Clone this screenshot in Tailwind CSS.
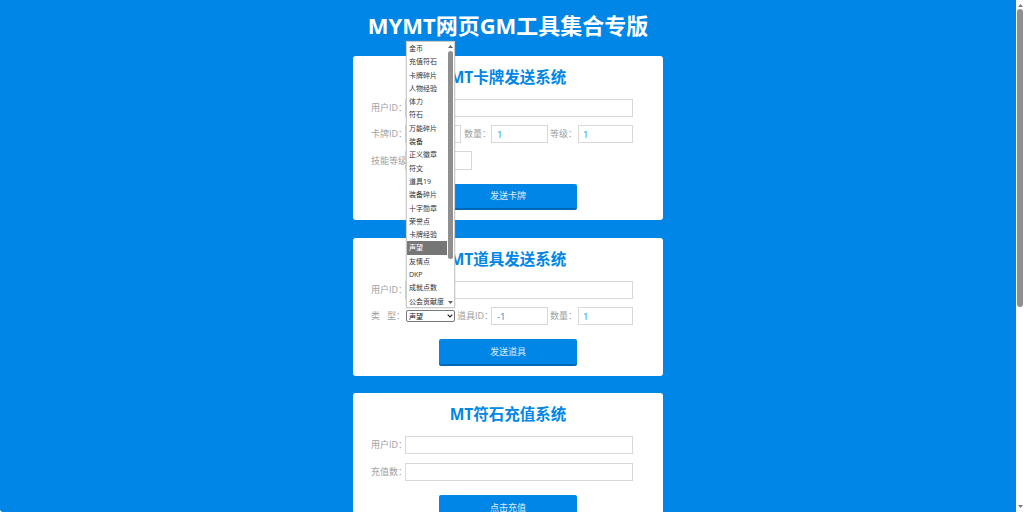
<!DOCTYPE html>
<html lang="en">
<head>
    <meta charset="UTF-8">
    <title>MYMT网页GM工具集合专版</title>
    <script src="https://cdn.jsdelivr.net/npm/@tailwindcss/browser@4"></script>
</head>
<body class="h-[512px] overflow-hidden flex bg-white font-['Open_Sans','Noto_Sans_CJK_SC',sans-serif]">
    <!-- page -->
    <div class="w-[1016px] h-[512px] overflow-hidden bg-[#0086e6] rounded-bl-[3px] flex flex-col items-center">
        <h1 class="h-14 shrink-0 pt-[7px] text-[22px] leading-[36px] font-bold text-white">MYMT网页GM工具集合专版</h1>

        <!-- card send -->
        <div class="w-[310px] h-[164px] shrink-0 bg-white rounded-[3px] pl-[18px] mb-[18px]">
            <h2 class="h-[43px] pt-[10px] pr-[18px] text-center text-[15.5px] leading-[22px] font-bold text-[#0086e6]">MT卡牌发送系统</h2>
            <div class="flex items-center h-[18px] mb-[8px]">
                <span class="w-[34px] text-[9px] text-[#a0a0a0] whitespace-nowrap">用户ID：</span>
                <input class="w-[228px] h-[18px] border border-[#d8d8d8] bg-white px-1 text-[9.500px]">
            </div>
            <div class="flex items-center h-[18px] mb-[8px]">
                <span class="w-[34px] text-[9px] text-[#a0a0a0] whitespace-nowrap">卡牌ID：</span>
                <input class="w-[56px] h-[18px] border border-[#d8d8d8] px-1 text-[9.500px]">
                <span class="w-[30px] pl-[3px] text-[9px] text-[#a0a0a0] whitespace-nowrap">数量：</span>
                <input value="1" class="w-[57px] h-[18px] border border-[#d8d8d8] px-[5px] text-[9.500px] text-[#2a8fdc]">
                <span class="w-[30px] pl-[2px] text-[9px] text-[#a0a0a0] whitespace-nowrap">等级：</span>
                <input value="1" class="w-[55px] h-[18px] border border-[#d8d8d8] px-[4px] text-[9.500px] text-[#2a8fdc]">
            </div>
            <div class="flex items-center h-[19px] mb-[14px]">
                <span class="w-[34px] text-[9px] text-[#a0a0a0] whitespace-nowrap">技能等级</span>
                <input class="w-[67px] h-[19px] border border-[#d8d8d8] px-1 text-[9.500px]">
            </div>
            <button class="block ml-[68px] w-[138px] h-[26px] rounded-[2px] bg-[#0086e6] border-b-2 border-[#0068b4] text-[9px] text-white/85">发送卡牌</button>
        </div>

        <!-- card items -->
        <div class="w-[310px] h-[138px] shrink-0 bg-white rounded-[3px] pl-[18px] mb-[17px]">
            <h2 class="h-[43px] pt-[10px] pr-[18px] text-center text-[15.5px] leading-[22px] font-bold text-[#0086e6]">MT道具发送系统</h2>
            <div class="flex items-center h-[18px] mb-[8px]">
                <span class="w-[34px] text-[9px] text-[#a0a0a0] whitespace-nowrap">用户ID：</span>
                <input class="w-[228px] h-[18px] border border-[#d8d8d8] px-1 text-[9.500px]">
            </div>
            <div class="flex items-center h-[18px] mb-[14px]">
                <span class="w-[35px] text-[9px] text-[#a0a0a0] whitespace-pre">类   型：</span>
                <div class="relative w-[49px] h-[12px]">
                    <div class="w-full h-full border border-[#777] rounded-[2px] flex items-center pl-[2px] text-[7px] leading-none text-[#222]">
                        <span class="flex-1">声望</span>
                        <svg class="w-[6px] h-[4px] mr-[1px]" viewBox="0 0 6 4"><path d="M.7.7 3 3l2.3-2.3" fill="none" stroke="#222" stroke-width="1.2"/></svg>
                    </div>
                    <!-- open select list -->
                    <div class="absolute left-0 bottom-[14px] w-[49px] h-[267px] bg-white border border-[#ccc] flex shadow-[0_0_1px_#999]">
                        <ul class="w-[40px] text-[7px] leading-[13.300px] text-[#333] whitespace-nowrap">
                            <li class="pl-[2px]">金币</li>
                            <li class="pl-[2px]">充值符石</li>
                            <li class="pl-[2px]">卡牌碎片</li>
                            <li class="pl-[2px]">人物经验</li>
                            <li class="pl-[2px]">体力</li>
                            <li class="pl-[2px]">符石</li>
                            <li class="pl-[2px]">万能碎片</li>
                            <li class="pl-[2px]">装备</li>
                            <li class="pl-[2px]">正义徽章</li>
                            <li class="pl-[2px]">符文</li>
                            <li class="pl-[2px]">道具19</li>
                            <li class="pl-[2px]">装备碎片</li>
                            <li class="pl-[2px]">十字勋章</li>
                            <li class="pl-[2px]">荣誉点</li>
                            <li class="pl-[2px]">卡牌经验</li>
                            <li class="pl-[2px] bg-[#767676] text-white">声望</li>
                            <li class="pl-[2px]">友情点</li>
                            <li class="pl-[2px]">DKP</li>
                            <li class="pl-[2px]">成就点数</li>
                            <li class="pl-[2px]">公会贡献度</li>
                        </ul>
                        <div class="w-[7px] flex flex-col items-center">
                            <svg class="w-[5px] h-[3px] mt-[3px]" viewBox="0 0 5 3"><path d="M2.5 0 5 3H0z" fill="#666"/></svg>
                            <div class="w-[5px] h-[208px] mt-[3px] rounded-full bg-[#8f8f8f]"></div>
                            <svg class="w-[5px] h-[3px] mt-auto mb-[3px]" viewBox="0 0 5 3"><path d="M0 0h5L2.500 3z" fill="#666"/></svg>
                        </div>
                    </div>
                </div>
                <span class="w-[36px] pl-[2px] text-[9px] text-[#a0a0a0] whitespace-nowrap">道具ID：</span>
                <input value="-1" class="w-[57px] h-[18px] border border-[#d8d8d8] px-[5px] text-[9.500px] text-[#2a8fdc]">
                <span class="w-[30px] pl-[2px] text-[9px] text-[#a0a0a0] whitespace-nowrap">数量：</span>
                <input value="1" class="w-[55px] h-[18px] border border-[#d8d8d8] px-[4px] text-[9.500px] text-[#2a8fdc]">
            </div>
            <button class="block ml-[68px] w-[138px] h-[27px] rounded-[2px] bg-[#0086e6] border-b-2 border-[#0068b4] text-[9px] text-white/85">发送道具</button>
        </div>

        <!-- card recharge -->
        <div class="w-[310px] h-[164px] shrink-0 bg-white rounded-[3px] pl-[18px]">
            <h2 class="h-[43px] pt-[10px] pr-[18px] text-center text-[15.5px] leading-[22px] font-bold text-[#0086e6]">MT符石充值系统</h2>
            <div class="flex items-center h-[18px] mb-[9px]">
                <span class="w-[34px] text-[9px] text-[#a0a0a0] whitespace-nowrap">用户ID：</span>
                <input class="w-[228px] h-[18px] border border-[#d8d8d8] px-1 text-[9.500px]">
            </div>
            <div class="flex items-center h-[18px] mb-[14px]">
                <span class="w-[34px] text-[9px] text-[#a0a0a0] whitespace-nowrap">充值数：</span>
                <input class="w-[228px] h-[18px] border border-[#d8d8d8] px-1 text-[9.500px]">
            </div>
            <button class="block ml-[68px] w-[138px] h-[27px] rounded-[2px] bg-[#0086e6] border-b-2 border-[#0068b4] text-[9px] text-white/85">点击充值</button>
        </div>
    </div>

    <!-- window scrollbar -->
    <div class="w-2 h-[512px] bg-white flex flex-col items-center">
        <svg class="w-[5px] h-[3px] mt-[4px]" viewBox="0 0 5 3"><path d="M2.5 0 5 3H0z" fill="#777"/></svg>
        <div class="w-[6px] h-[298px] mt-[2px] rounded-full bg-[#8f8f8f]"></div>
        <svg class="w-[5px] h-[3px] mt-auto mb-[4px]" viewBox="0 0 5 3"><path d="M0 0h5L2.500 3z" fill="#777"/></svg>
    </div>
</body>
</html>
